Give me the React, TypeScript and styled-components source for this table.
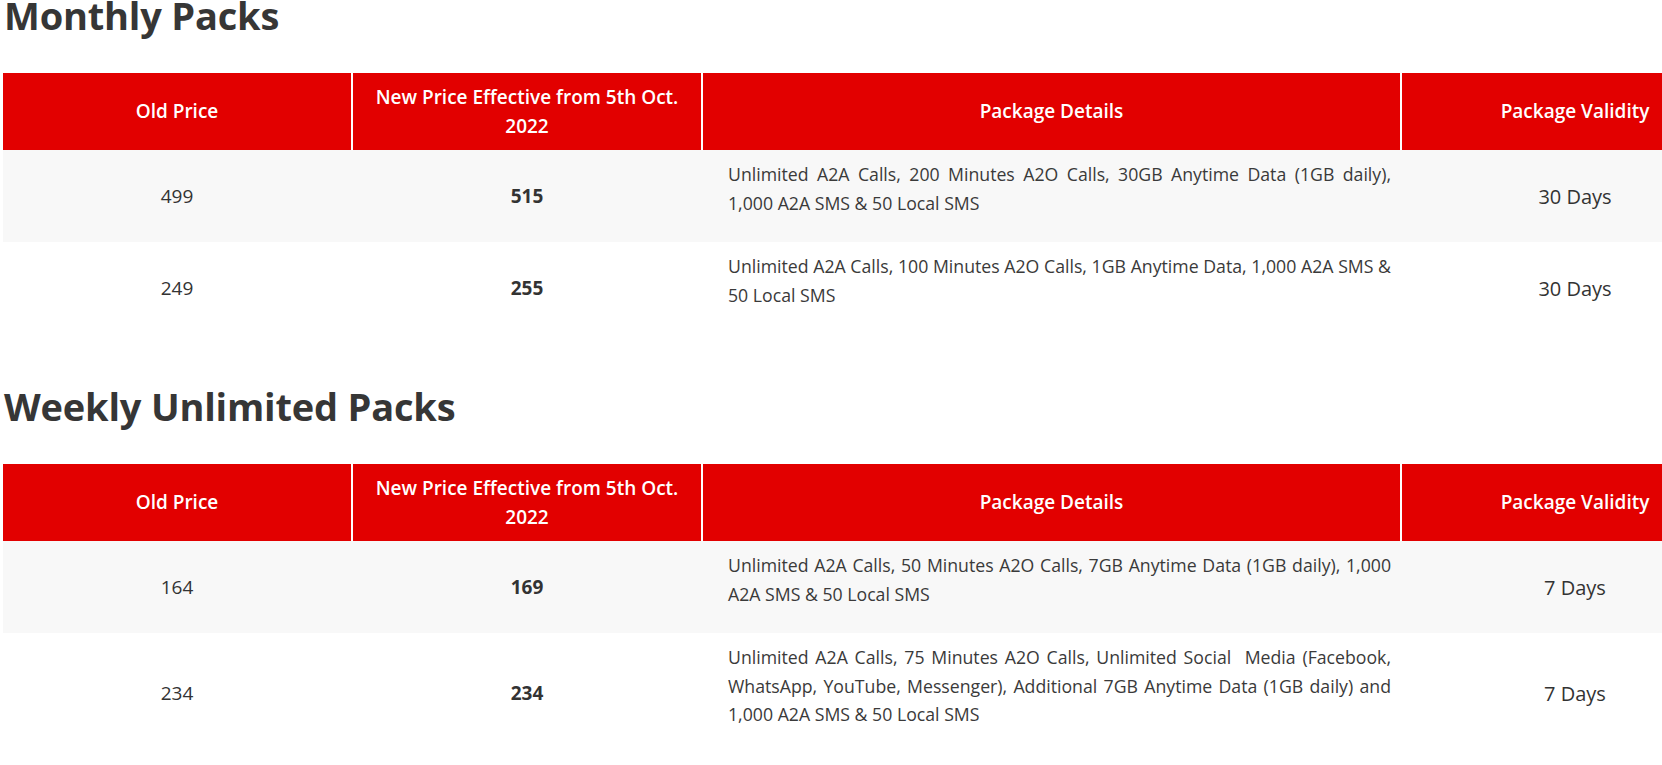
import React from 'react';
import styled, { createGlobalStyle } from 'styled-components';

const GlobalStyle = createGlobalStyle`
	html, body {
		margin: 0;
		padding: 0;
		background: #ffffff;
		overflow: hidden;
	}
	body {
		font-family: 'Open Sans', 'Lato', sans-serif;
		color: #333333;
	}
`;

type Pack = {
	oldPrice: string;
	newPrice: string;
	details: string;
	validity: string;
};

const monthlyPacks: Pack[] = [
	{
		oldPrice: '499',
		newPrice: '515',
		details: 'Unlimited A2A Calls, 200 Minutes A2O Calls, 30GB Anytime Data (1GB daily), 1,000 A2A SMS & 50 Local SMS',
		validity: '30 Days',
	},
	{
		oldPrice: '249',
		newPrice: '255',
		details: 'Unlimited A2A Calls, 100 Minutes A2O Calls, 1GB Anytime Data, 1,000 A2A SMS & 50 Local SMS',
		validity: '30 Days',
	},
];

const weeklyPacks: Pack[] = [
	{
		oldPrice: '164',
		newPrice: '169',
		details: 'Unlimited A2A Calls, 50 Minutes A2O Calls, 7GB Anytime Data (1GB daily), 1,000 A2A SMS & 50 Local SMS',
		validity: '7 Days',
	},
	{
		oldPrice: '234',
		newPrice: '234',
		details: 'Unlimited A2A Calls, 75 Minutes A2O Calls, Unlimited Social\u00a0 Media (Facebook, WhatsApp, YouTube, Messenger), Additional 7GB Anytime Data (1GB daily) and 1,000 A2A SMS & 50 Local SMS',
		validity: '7 Days',
	},
];

const Page = styled.main`
	padding: 0 0 0 3px;
	width: 1745px;
`;

const Section = styled.section`
	& + & {
		margin-top: 57px;
	}
`;

const Title = styled.h2`
	margin: 0 0 43px 1px;
	font-family: 'Open Sans', sans-serif;
	font-size: 38px;
	line-height: 30px;
	font-weight: 700;
	letter-spacing: -0.2px;
	color: #363636;
`;

const Table = styled.div`
	width: 1745px;
`;

const Row = styled.div<{ $striped?: boolean }>`
	display: grid;
	grid-template-columns: 348px 348px 697px 346px;
	column-gap: 2px;
	background: ${({ $striped }) => ($striped ? '#f8f8f8' : '#ffffff')};
`;

const HeadCell = styled.div`
	height: 77px;
	box-sizing: border-box;
	padding: 0 20px;
	display: flex;
	align-items: center;
	justify-content: center;
	text-align: center;
	background: #e20000;
	color: #ffffff;
	font-family: 'Open Sans', sans-serif;
	font-size: 19px;
	line-height: 29px;
	font-weight: 600;
`;

const Cell = styled.div<{ $bold?: boolean }>`
	display: flex;
	align-items: center;
	justify-content: center;
	font-family: 'Open Sans', sans-serif;
	font-size: 19px;
	font-weight: ${({ $bold }) => ($bold ? 700 : 400)};
	color: #333333;
`;

const DetailsCell = styled.div`
	padding: 10px 9px 10px 25px;
	font-family: 'Open Sans', sans-serif;
	font-size: 17.7px;
	line-height: 28.5px;
	color: #3a3a3a;
	text-align: justify;

	p {
		margin: 0 0 15px;
	}
`;

const ValidityCell = styled.div`
	display: flex;
	align-items: center;
	justify-content: center;
	font-family: 'Open Sans', sans-serif;
	font-size: 20px;
	color: #333333;
`;

const PackTable = ({ packs }: { packs: Pack[] }) => (
	<Table>
		<Row>
			<HeadCell>Old Price</HeadCell>
			<HeadCell>New Price Effective from 5th Oct. 2022</HeadCell>
			<HeadCell>Package Details</HeadCell>
			<HeadCell>Package Validity</HeadCell>
		</Row>
		{packs.map((pack, i) => (
			<Row key={i} $striped={i % 2 === 0}>
				<Cell>{pack.oldPrice}</Cell>
				<Cell $bold>{pack.newPrice}</Cell>
				<DetailsCell>
					<p>{pack.details}</p>
				</DetailsCell>
				<ValidityCell>{pack.validity}</ValidityCell>
			</Row>
		))}
	</Table>
);

const App = () => (
	<>
		<GlobalStyle />
		<Page>
			<Section>
				<Title>Monthly Packs</Title>
				<PackTable packs={monthlyPacks} />
			</Section>
			<Section>
				<Title>Weekly Unlimited Packs</Title>
				<PackTable packs={weeklyPacks} />
			</Section>
		</Page>
	</>
);

export default App;
